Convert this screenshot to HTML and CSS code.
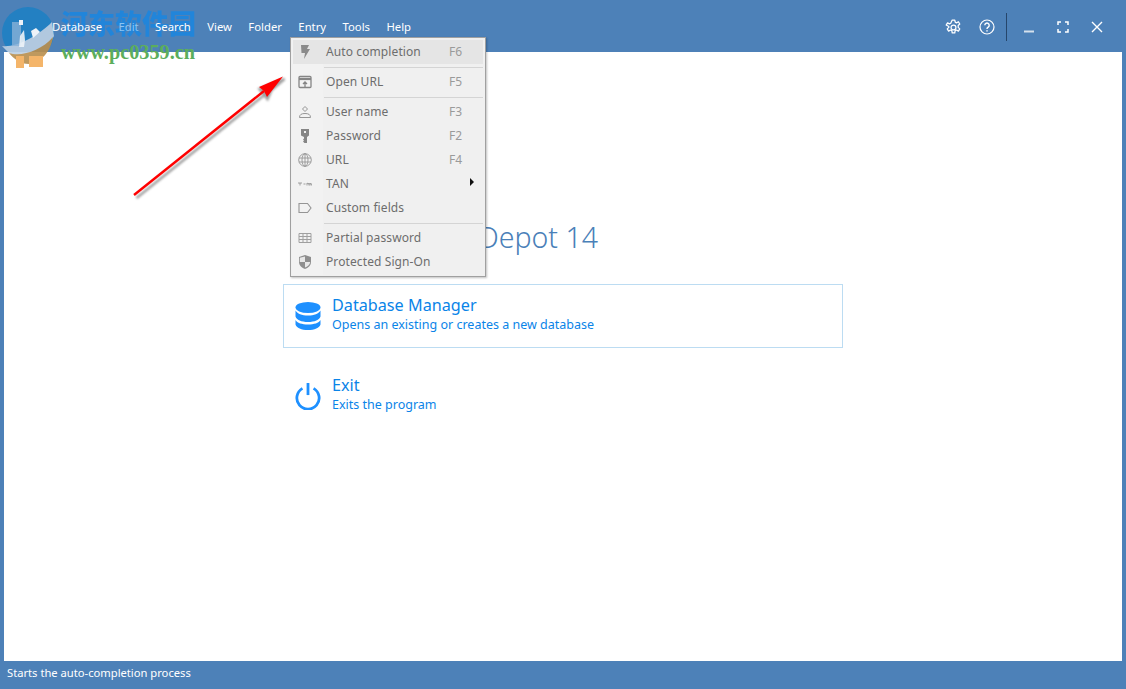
FILE: index.html
```html
<!DOCTYPE html>
<html lang="en">
<head>
<meta charset="utf-8">
<title>Password Depot 14</title>
<link rel="stylesheet" href="styles.css">
</head>
<body>
<div class="window">
  <header class="titlebar">
    <nav class="menubar">
      <span class="menu-label">Database</span>
      <span class="menu-label menu-label-tinted">Edit</span>
      <span class="menu-label">Search</span>
      <span class="menu-label">View</span>
      <span class="menu-label">Folder</span>
      <span class="menu-label">Entry</span>
      <span class="menu-label">Tools</span>
      <span class="menu-label">Help</span>
    </nav>
    <div class="controls">
      <svg class="ctl ctl-gear" viewBox="0 0 16 16" fill="none" stroke="#fff" stroke-width="1.2"><path d="M6.8 1h2.400l.4 2 1.200.6 1.800-1 1.300 2.100-1.500 1.400v1.800l1.500 1.400-1.300 2.100-1.800-1-1.200.6-.4 2H6.800l-.4-2-1.200-.6-1.800 1-1.300-2.100 1.500-1.400V7.100L1.100 5.700l1.300-2.100 1.800 1 1.200-.6z" stroke-linejoin="round"/><circle cx="8" cy="8" r="2.300"/></svg>
      <svg class="ctl ctl-help" viewBox="0 0 16 16" fill="none" stroke="#fff" stroke-width="1.200"><circle cx="8" cy="8" r="7"/><path d="M5.800 6.200a2.200 2.200 0 1 1 3.400 1.900c-.8.500-1.200.9-1.200 1.900" stroke-width="1.400"/><path d="M8 11.200v1.400" stroke-width="1.500"/></svg>
      <span class="ctl-sep"></span>
      <svg class="ctl ctl-min" viewBox="0 0 10 12"><path d="M0 10.500h10" stroke="#d5e0ec" stroke-width="2"/></svg>
      <svg class="ctl ctl-max" viewBox="0 0 12 12" fill="none" stroke="#fff" stroke-width="1.500"><path d="M1 4V1h3M8 1h3v3M11 8v3H8M4 11H1V8"/></svg>
      <svg class="ctl ctl-close" viewBox="0 0 12 12" fill="none" stroke="#fff" stroke-width="1.400"><path d="M1 1l10 10M11 1L1 11"/></svg>
    </div>
  </header>

  <main class="content">
    <h1 class="product">Password Depot 14</h1>
    <div class="action action-boxed">
      <svg class="action-icon" viewBox="0 0 26 28" fill="#1e90ff"><ellipse cx="13" cy="5.500" rx="12.500" ry="5.500"/><path d="M.5 8.500c1.500 3 6.500 5 12.500 5s11-2 12.500-5v6c-1 3.300-6 5.500-12.500 5.500S1.500 17.800.5 14.500z"/><path d="M.5 18c1.500 3 6.500 4.500 12.500 4.500S24 21 25.500 18v4.500C24.500 26 19.500 28 13 28S1.500 26 .5 22.500z"/></svg>
      <div class="action-text">
        <div class="action-title">Database Manager</div>
        <div class="action-sub">Opens an existing or creates a new database</div>
      </div>
    </div>
    <div class="action">
      <svg class="action-icon" viewBox="0 0 28 28" fill="none" stroke="#1e90ff" stroke-width="3"><path d="M8 5.800a12 12 0 1 0 12 0"/><path d="M14 0v13"/></svg>
      <div class="action-text">
        <div class="action-title">Exit</div>
        <div class="action-sub">Exits the program</div>
      </div>
    </div>
  </main>

  <footer class="statusbar">Starts the auto-completion process</footer>

  <div class="dropdown">
    <div class="gutter"></div>
    <div class="item item-active">
      <svg class="mi" viewBox="0 0 14 14" fill="#8a8a8a"><path d="M3 0h8L9 4h3L6 14l1-6H3.500z"/></svg>
      <span class="mi-label">Auto completion</span><span class="mi-key">F6</span>
    </div>
    <div class="mi-sep"></div>
    <div class="item">
      <svg class="mi" viewBox="0 0 14 14" fill="none" stroke="#858585" stroke-width="1.300"><rect x="1" y="1.500" width="12" height="11" rx="1"/><path d="M1 4h12" stroke-width="2.200"/><path d="M7 12V7M5 9l2-2 2 2"/></svg>
      <span class="mi-label">Open URL</span><span class="mi-key">F5</span>
    </div>
    <div class="mi-sep"></div>
    <div class="item">
      <svg class="mi" viewBox="0 0 14 14" fill="none" stroke="#959595" stroke-width="1"><path d="M7 1.500l2.500 2.500L7 6.500 4.500 4z"/><path d="M1.500 12.500c0-3 2-4 5.500-4s5.500 1 5.500 4z"/></svg>
      <span class="mi-label">User name</span><span class="mi-key">F3</span>
    </div>
    <div class="item">
      <svg class="mi" viewBox="0 0 14 14" fill="#858585"><path d="M3 0h8v6.500L9 8v6H6.500L5 12.500l1-1-1-1 1-1V8L3 6.500z"/><rect x="6" y="2" width="2" height="2" fill="#f0f0f0"/></svg>
      <span class="mi-label">Password</span><span class="mi-key">F2</span>
    </div>
    <div class="item">
      <svg class="mi" viewBox="0 0 14 14" fill="none" stroke="#959595" stroke-width=".9"><circle cx="7" cy="7" r="6.300"/><ellipse cx="7" cy="7" rx="3" ry="6.300"/><path d="M1 5h12M1 9h12M7 .7v12.600"/></svg>
      <span class="mi-label">URL</span><span class="mi-key">F4</span>
    </div>
    <div class="item">
      <svg class="mi" viewBox="0 0 14 14" fill="none" stroke="#959595" stroke-width=".9"><path d="M0 6h4M2 6v2.500M5.500 7h2M9 8.500V6l1.500 1M10.500 7l.5-1v2.500M12 8.500V6l2 2.500V6"/></svg>
      <span class="mi-label">TAN</span><span class="submenu-arrow"></span>
    </div>
    <div class="item">
      <svg class="mi" viewBox="0 0 14 14" fill="none" stroke="#959595" stroke-width="1.100"><path d="M1 2.500h8.500L13 7l-3.500 4.500H1z"/></svg>
      <span class="mi-label">Custom fields</span>
    </div>
    <div class="mi-sep"></div>
    <div class="item">
      <svg class="mi" viewBox="0 0 14 14" fill="none" stroke="#a0a0a0" stroke-width="1"><path d="M1 2.500h12v9H1zM1 5.500h12M1 8.500h12M5 2.500v9M9 2.500v9"/></svg>
      <span class="mi-label">Partial password</span>
    </div>
    <div class="item">
      <svg class="mi" viewBox="0 0 14 14"><path d="M7 0l6 2v5c0 3.500-3 6-6 7-3-1-6-3.500-6-7V2z" fill="#8f8f8f"/><path d="M7 1.500V7H1.800V2.700zM7 7h5.200c-.3 2.800-2.800 4.700-5.200 5.500z" fill="#e8e8e8"/></svg>
      <span class="mi-label">Protected Sign-On</span>
    </div>
  </div>

  <svg class="arrow" viewBox="0 0 160 130" width="160" height="130">
    <defs><filter id="arrow-blur" x="-20%" y="-20%" width="140%" height="140%"><feGaussianBlur stdDeviation="1"/></filter></defs>
    <path d="M3 122L132 18M151 3l-25 10 8 10 4-9z" stroke="#555" stroke-width="2.600" fill="#555" opacity=".55" transform="translate(1.500 2)" filter="url(#arrow-blur)"/>
    <path d="M2 121L132 17" stroke="#f00" stroke-width="2.400"/>
    <path d="M151 2.500l-24 10.500 5 4 3 6z" fill="#f00"/>
  </svg>

  <div class="watermark">
    <svg class="wm-logo" viewBox="0 0 56 62">
      <circle cx="27" cy="27" r="26" fill="#1f80c4"/>
      <path d="M1 40c14 2 36-10 50-24l2 14C48 42 36 50 28 53 16 53 8 48 1 40z" fill="#bcd0e4"/>
      <path d="M8 47c12 4 32-2 44-16-2 14-12 26-24 27-9 0-15-5-20-11z" fill="#b98f4d"/>
      <path d="M15 50h8v12h-8zM28 50h14v11H28z" fill="#f3ad5a"/>
      <path d="M11 16h9v24h-9z" fill="#8fb7dc" opacity=".8"/>
      <path d="M18 14h4v5h-4zM30 25l5-3 4 4-7 6z" fill="#fff"/>
      <path d="M19 30l4-6 1 10-1 7h-5z" fill="#fff" opacity=".9"/>
    </svg>
    <span class="wm-cn">河东软件园</span>
    <span class="wm-url">www.pc0359.cn</span>
  </div>
</div>
</body>
</html>
```
FILE: styles.css
```css
* { box-sizing: border-box; }
html, body { margin: 0; height: 100%; }
body { font-family: "Noto Sans", "Open Sans", sans-serif; overflow: hidden; }

.window {
  position: relative;
  width: 1126px;
  height: 689px;
  background: #4d81b8;
  display: flex;
  flex-direction: column;
  padding: 0 4px;
}

.titlebar {
  height: 52px;
  flex: none;
  display: flex;
  align-items: center;
  justify-content: space-between;
  padding: 2px 0 0 48px;
}
.menubar { position: relative; z-index: 1; display: flex; gap: 16.4px; padding-bottom: 2px; }
.menu-label { color: #fff; font-size: 11.3px; }
.menu-label-tinted { color: #8cc4f2; }

.controls { display: flex; align-items: center; }
.ctl { display: block; }
.ctl-gear { width: 17px; height: 17px; margin-right: 17px; }
.ctl-help { width: 16px; height: 16px; margin-right: 11px; }
.ctl-sep { width: 1px; height: 28px; background: #26466b; margin-right: 17px; }
.ctl-min { width: 10px; height: 12px; margin-right: 23px; }
.ctl-max { width: 12px; height: 12px; margin-right: 22px; }
.ctl-close { width: 12px; height: 12px; margin-right: 19px; }

.content {
  flex: 1;
  background: #fff;
  display: flex;
  flex-direction: column;
  align-items: center;
  padding-top: 163px;
}
.product {
  margin: 0;
  width: 560px;
  height: 69px;
  padding-right: 245px;
  text-align: right;
  font-size: 28.5px;
  font-weight: 300;
  line-height: 44px;
  color: #4a80b8;
}
.action {
  width: 560px;
  height: 64px;
  flex: none;
  display: flex;
  align-items: center;
  border: 1px solid transparent;
  padding-left: 11px;
  margin-bottom: 16px;
}
.action-boxed { border-color: #bcdcf2; }
.action-icon { width: 26px; height: 28px; flex: none; margin-right: 11px; }
.action-text { padding-bottom: 5px; }
.action-title { font-size: 16.2px; line-height: 22px; color: #0a84e8; }
.action-sub { font-size: 12.5px; line-height: 17px; color: #0a84e8; }

.statusbar {
  height: 28px;
  flex: none;
  color: #fff;
  font-size: 11.2px;
  line-height: 24px;
  padding-left: 3px;
}

/* popup menu over the page */
.dropdown {
  position: absolute;
  left: 290px;
  top: 37px;
  width: 196px;
  height: 240px;
  background: #f0f0f0;
  border: 1px solid #a0a0a0;
  padding: 2px;
  box-shadow: 1px 1px 2px rgba(0, 0, 0, .25);
}
.gutter {
  position: absolute;
  left: 1px;
  top: 1px;
  bottom: 1px;
  width: 31px;
  background: #f2f2f2;
}
.item {
  position: relative;
  height: 24px;
  display: flex;
  align-items: center;
  font-size: 12px;
  line-height: 16px;
  color: #6d6d6d;
  padding-left: 5px;
}
.item-active { background: #e5e5e5; }
.mi { width: 14px; height: 14px; flex: none; margin-right: 14px; }
.mi-label { width: 123px; letter-spacing: .1px; }
.mi-key { color: #9a9a9a; }
.submenu-arrow {
  width: 0;
  height: 0;
  margin-left: 21px;
  margin-top: -4px;
  border-left: 4px solid #111;
  border-top: 4px solid transparent;
  border-bottom: 4px solid transparent;
}
.mi-sep {
  position: relative;
  height: 6px;
  margin-left: 31px;
  display: flex;
  align-items: center;
}
.mi-sep::before {
  content: "";
  flex: 1;
  height: 1px;
  background: #d4d4d4;
}

/* annotations lying over the screenshot */
.arrow { position: absolute; left: 132px; top: 74px; }
.watermark { position: absolute; left: 0; top: 0; width: 200px; height: 64px; pointer-events: none; }
.wm-logo { position: absolute; left: 1px; top: 6px; width: 56px; height: 62px; opacity: .9; }
.wm-cn {
  position: absolute;
  left: 61px;
  top: 6px;
  font-family: "Noto Sans CJK SC", sans-serif;
  font-weight: 900;
  font-size: 27px;
  line-height: 34px;
  color: #1a86e0;
  opacity: .85;
  white-space: nowrap;
}
.wm-url {
  position: absolute;
  left: 61px;
  top: 41px;
  font-family: "Liberation Serif", serif;
  font-weight: 700;
  font-size: 20.3px;
  line-height: 22px;
  color: #5cae5c;
  white-space: nowrap;
}
```
